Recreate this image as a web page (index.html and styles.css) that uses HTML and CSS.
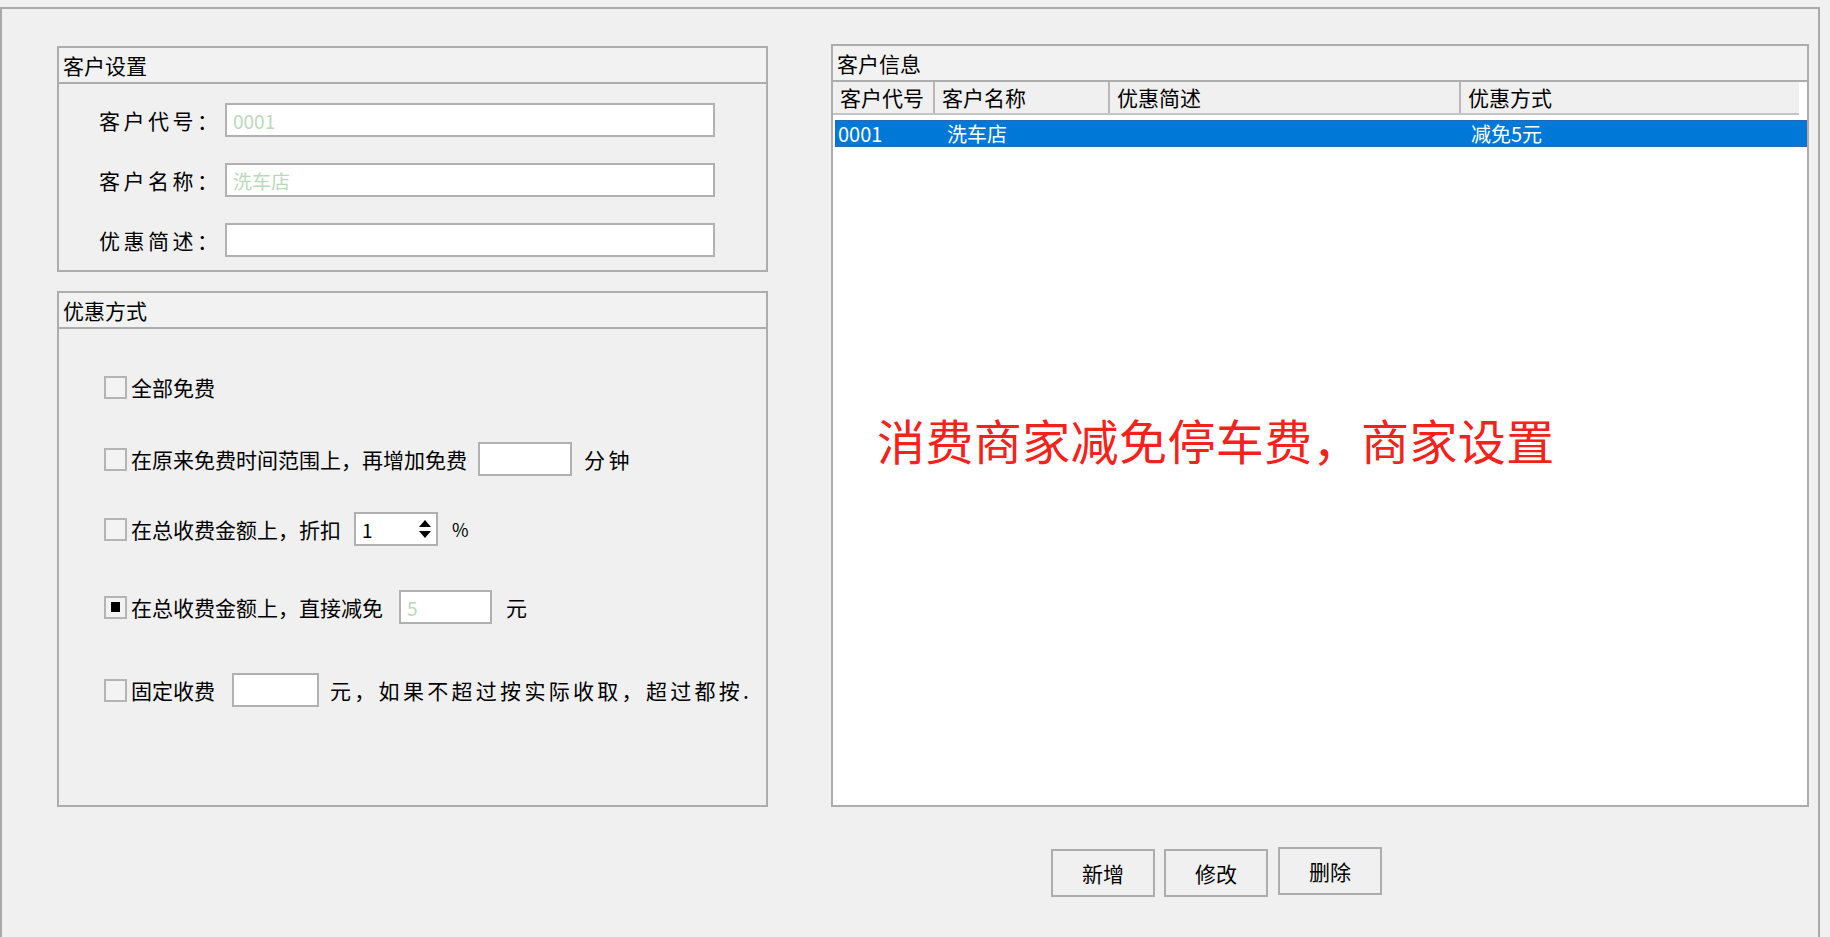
FILE: index.html
```html
<!DOCTYPE html>
<html lang="zh-CN">
<head>
<meta charset="utf-8">
<title>客户设置</title>
<link rel="stylesheet" href="styles.css">
</head>
<body>
<div class="frame">
  <div class="left-col">
    <section class="group group-customer">
      <div class="group-title">客户设置</div>
      <div class="form-grid">
        <label class="field-label">客户代号：</label>
        <div class="textbox"><span class="disabled-text">0001</span></div>
        <label class="field-label">客户名称：</label>
        <div class="textbox"><span class="disabled-text">洗车店</span></div>
        <label class="field-label">优惠简述：</label>
        <div class="textbox"></div>
      </div>
    </section>
    <section class="group group-discount">
      <div class="group-title">优惠方式</div>
      <div class="options">
        <div class="opt-row row-1">
          <span class="checkbox"></span>
          <span class="opt-text">全部免费</span>
        </div>
        <div class="opt-row row-2">
          <span class="checkbox"></span>
          <span class="opt-text">在原来免费时间范围上，再增加免费</span>
          <div class="textbox box-minutes"></div>
          <span class="spaced unit-minutes">分钟</span>
        </div>
        <div class="opt-row row-3">
          <span class="checkbox"></span>
          <span class="opt-text">在总收费金额上，折扣</span>
          <div class="textbox spinner">
            <span class="spin-value">1</span>
            <span class="spin-arrows">
              <svg width="14" height="22" viewBox="0 0 14 22"><path d="M7 2 L13 9 L1 9 Z" fill="#000"/><path d="M1 13 L13 13 L7 20 Z" fill="#000"/></svg>
            </span>
          </div>
          <span class="spaced unit-percent">%</span>
        </div>
        <div class="opt-row row-4">
          <span class="checkbox checked"><span class="check-mark"></span></span>
          <span class="opt-text">在总收费金额上，直接减免</span>
          <div class="textbox box-amount"><span class="disabled-text">5</span></div>
          <span class="spaced unit-yuan">元</span>
        </div>
        <div class="opt-row row-5">
          <span class="checkbox"></span>
          <span class="opt-text">固定收费</span>
          <div class="textbox box-fixed"></div>
          <span class="spaced-wide unit-fixed">元，如果不超过按实际收取，超过都按.</span>
        </div>
      </div>
    </section>
  </div>
  <div class="right-col">
    <section class="group group-list">
      <div class="group-title">客户信息</div>
      <div class="list-area">
        <div class="list-head">
          <div class="hcell c1">客户代号</div>
          <div class="hcell c2">客户名称</div>
          <div class="hcell c3">优惠简述</div>
          <div class="hcell c4">优惠方式</div>
        </div>
        <div class="list-row selected">
          <div class="rcell r1">0001</div>
          <div class="rcell r2">洗车店</div>
          <div class="rcell r3"></div>
          <div class="rcell r4">减免5元</div>
        </div>
        <div class="annotation">消费商家减免停车费，商家设置</div>
      </div>
    </section>
    <div class="buttons">
      <button class="btn">新增</button>
      <button class="btn">修改</button>
      <button class="btn btn-up">删除</button>
    </div>
  </div>
</div>
</body>
</html>
```

FILE: styles.css
```css
* { box-sizing: border-box; }

html, body {
  margin: 0;
  padding: 0;
  width: 1830px;
  height: 937px;
  overflow: hidden;
  background: #f0f0f0;
  font-family: "Noto Sans CJK SC", "Noto Sans", sans-serif;
  font-size: 21px;
  color: #000;
}

.frame {
  margin-top: 7px;
  width: 1820px;
  height: 940px;
  border: 2px solid #a9a9a9;
  border-bottom: none;
  padding: 35px 0 0 55px;
  display: flex;
  gap: 63px;
  align-items: flex-start;
}

/* group boxes */
.group {
  border: 2px solid #adadad;
  background: #f0f0f0;
  display: flex;
  flex-direction: column;
}

.group-title {
  height: 36px;
  line-height: 34px;
  padding-left: 4px;
  border-bottom: 2px solid #adadad;
  background: #f2f2f2;
  white-space: nowrap;
}

.left-col {
  width: 711px;
  margin-top: 2px;
  display: flex;
  flex-direction: column;
  gap: 19px;
}

.group-customer { height: 226px; }

.form-grid {
  padding: 19px 0 0 40px;
  display: grid;
  grid-template-columns: 126px 490px;
  row-gap: 26px;
  align-items: center;
}

.field-label {
  letter-spacing: 3.5px;
  white-space: nowrap;
  line-height: 34px;
}

.textbox {
  height: 34px;
  background: #fff;
  border: 2px solid #b1b1b1;
  display: flex;
  align-items: center;
  padding-left: 6px;
  font-size: 19px;
}

.disabled-text {
  color: #bcd8bc;
}

.group-discount { height: 516px; }

.options {
  padding: 41px 0 0 45px;
  display: flex;
  flex-direction: column;
}

.opt-row {
  height: 34px;
  display: flex;
  align-items: center;
  white-space: nowrap;
}

.row-2 { margin-top: 38px; }
.row-3 { margin-top: 36px; }
.row-4 { margin-top: 44px; }
.row-5 { margin-top: 49px; }

.checkbox {
  width: 23px;
  height: 23px;
  border: 2px solid #b4b4b4;
  background: #f3f3f3;
  display: flex;
  align-items: center;
  justify-content: center;
  flex: none;
}

.check-mark {
  width: 9px;
  height: 10px;
  background: #000;
}

.opt-text {
  margin-left: 4px;
}

.spaced { letter-spacing: 3.5px; }
.spaced-wide { letter-spacing: 3.3px; }

.box-minutes { width: 94px; margin-left: 11px; }
.unit-minutes { margin-left: 12px; }

.spinner {
  width: 84px;
  margin-left: 13px;
  justify-content: space-between;
  padding: 0 4px 0 6px;
}
.spin-value { line-height: 1; }
.spin-arrows { display: flex; align-items: center; }
.unit-percent { margin-left: 14px; font-size: 18px; }

.box-amount { width: 93px; margin-left: 16px; }
.unit-yuan { margin-left: 14px; }

.box-fixed { width: 87px; margin-left: 17px; }
.unit-fixed { margin-left: 11px; }

/* right side */
.right-col {
  width: 978px;
  display: flex;
  flex-direction: column;
}

.group-list { height: 763px; }

.list-area {
  flex: 1;
  background: #fff;
  position: relative;
}

.list-head {
  height: 33px;
  margin-right: 8px;
  display: flex;
  background: #f0f0f0;
  border-bottom: 2px solid #c4c4c4;
}

.hcell {
  height: 31px;
  line-height: 31px;
  padding-left: 7px;
  border-right: 2px solid #b8b8b8;
  white-space: nowrap;
}
.c1 { width: 102px; }
.c2 { width: 175px; }
.c3 { width: 351px; }
.c4 { flex: 1; border-right: none; }

.list-row {
  margin-top: 5px;
  margin-left: 2px;
  height: 27px;
  display: flex;
  align-items: center;
  white-space: nowrap;
}

.selected {
  background: #0078d7;
  color: #fff;
  border: 1px dotted #3a5f8f;
}

.rcell { line-height: 25px; font-size: 20px; }
.r1 { width: 100px; padding-left: 2px; }
.r2 { width: 175px; padding-left: 11px; }
.r3 { width: 351px; }
.r4 { flex: 1; padding-left: 9px; }

.annotation {
  position: absolute;
  left: 44px;
  top: 333px;
  font-size: 48px;
  line-height: 48px;
  letter-spacing: 0.4px;
  color: #f5221b;
  white-space: nowrap;
}

.buttons {
  padding: 42px 0 0 220px;
  display: flex;
  gap: 9px;
  align-items: flex-start;
}

.btn {
  width: 104px;
  height: 48px;
  background: #f0f0f0;
  border: 2px solid #adadad;
  font-family: "Noto Sans CJK SC", "Noto Sans", sans-serif;
  font-size: 21px;
  color: #000;
  padding: 0;
}

.btn-up { margin-top: -2px; margin-left: 1px; }
```
